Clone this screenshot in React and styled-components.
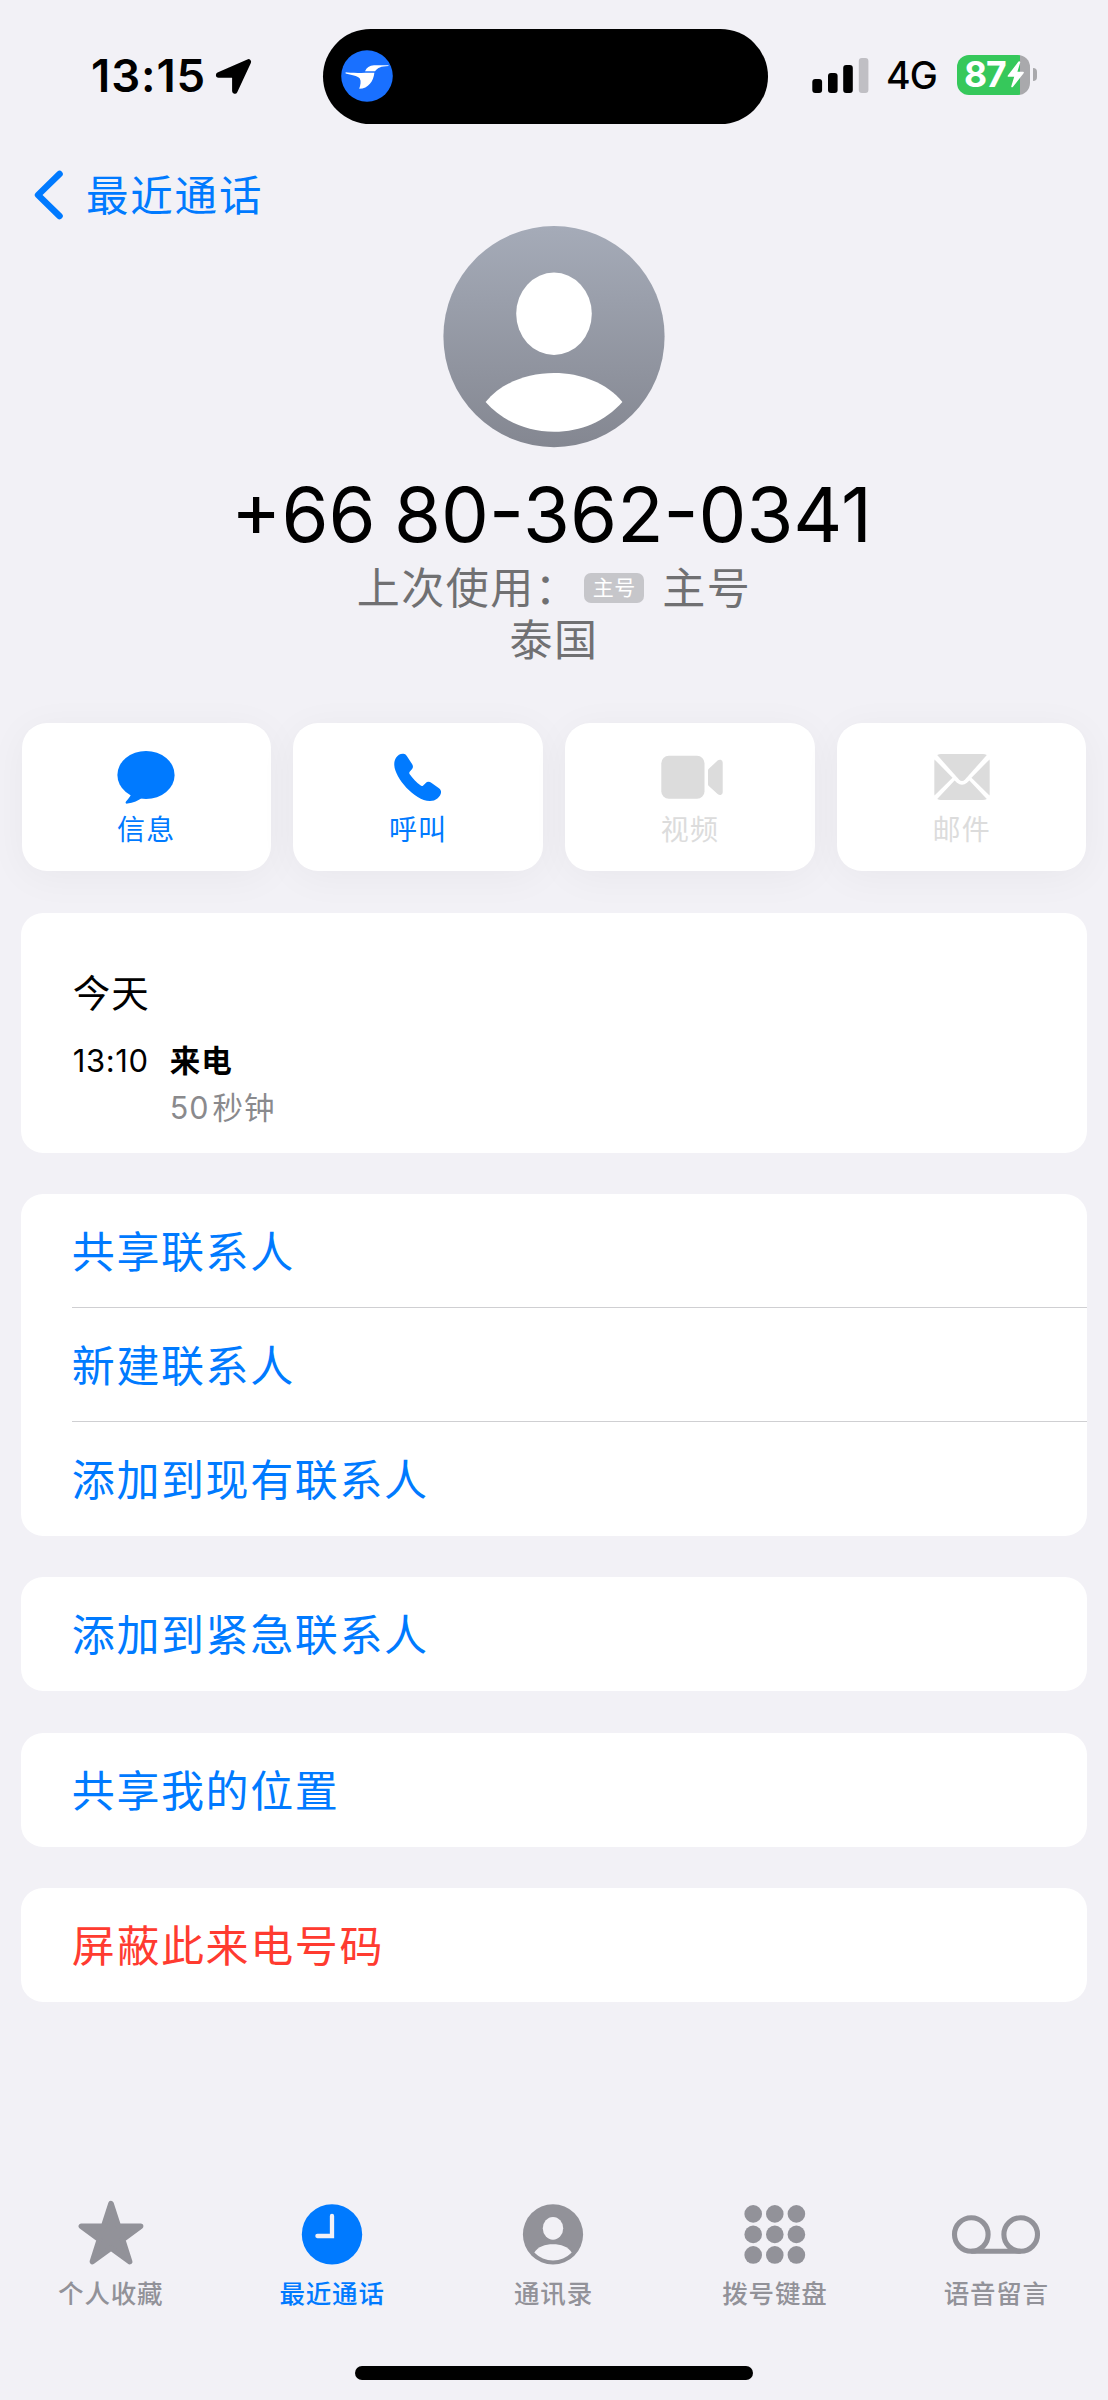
import React from 'react';
import styled, { createGlobalStyle } from 'styled-components';

const BLUE = '#007aff'
const GRAY = '#929299'

const actions = [
  { label: '信息', icon: <MessageIcon /> },
  { label: '呼叫', icon: <PhoneIcon /> },
  { label: '视频', icon: <VideoIcon />, disabled: true },
  { label: '邮件', icon: <MailIcon />, disabled: true },
]

const groups = [
  { items: ['共享联系人', '新建联系人', '添加到现有联系人'] },
  { items: ['添加到紧急联系人'] },
  { items: ['共享我的位置'] },
  { items: ['屏蔽此来电号码'], danger: true },
]

const tabs = [
  { label: '个人收藏', icon: <StarIcon /> },
  { label: '最近通话', icon: <ClockIcon />, active: true },
  { label: '通讯录', icon: <ContactIcon /> },
  { label: '拨号键盘', icon: <KeypadIcon /> },
  { label: '语音留言', icon: <VoicemailIcon /> },
]

function LocationIcon() {
  return (
    <svg width="37" height="37" viewBox="0 0 37 37">
      <path d="M3.6 17L33.4 3.9L19.8 33V17Z" stroke="#000" strokeWidth="5.4" strokeLinejoin="round" />
    </svg>
  )
}

function BirdIcon() {
  return (
    <svg width="52" height="52" viewBox="0 0 52 52">
      <circle cx="26" cy="26" r="25.8" fill="#1970ff" />
      <path d="M24 21.3C25.5 17.5 28.5 15.3 33 15.2L47.5 15.2V15.9C39.5 16.2 37 17.5 34 21.2Z" fill="#fff" />
      <path d="M4.6 22.3C9 23.1 19 22.9 33.4 22.7C32.5 31 27.5 38.6 18.2 38.8C19.5 35 20.3 31.5 18.8 28.6C16.5 25 10 25.3 4.6 23.4Z" fill="#fff" />
    </svg>
  )
}

function SignalIcon() {
  return (
    <svg width="57" height="36" viewBox="0 0 57 36">
      <rect x="0.3" y="21" width="9.8" height="14" rx="3" />
      <rect x="16" y="15" width="9.6" height="20" rx="3" />
      <rect x="31.2" y="7" width="9.6" height="28" rx="3" />
      <rect x="46.8" y="0" width="9.6" height="35" rx="3" fill="#c0bfc4" />
    </svg>
  )
}

function BoltIcon() {
  return (
    <svg width="18" height="27" viewBox="0 0 18 27">
      <path d="M11.5 0.6L0.8 14.6Q0.3 15.8 1.5 15.8H7.2L4.2 25.4Q4.6 27 6 25.8L16.6 12.2Q17.4 10.8 16 10.7H10.4L13.3 1.3Q12.8 -0.4 11.5 0.6Z" fill="#fff" />
    </svg>
  )
}

function BackIcon() {
  return (
    <svg width="30" height="50" viewBox="0 0 30 50">
      <path d="M25.6 3.9L4 25L25.6 46.1" stroke={BLUE} strokeWidth="6.4" strokeLinecap="round" strokeLinejoin="round" fill="none" />
    </svg>
  )
}

function Avatar() {
  return (
    <svg width="222" height="222" viewBox="0 0 222 222">
      <defs>
        <linearGradient id="avatar" x1="0" y1="0" x2="0" y2="1">
          <stop offset="0" stopColor="#a5abb8" />
          <stop offset="1" stopColor="#848791" />
        </linearGradient>
      </defs>
      <circle cx="111" cy="110.6" r="110.6" fill="url(#avatar)" />
      <ellipse cx="111" cy="87.8" rx="37.8" ry="41.2" fill="#fff" />
      <path d="M42.6 176C58 157 84 147 111 147C138 147 164 157 179.4 176C162 195.4 138 205.8 111 205.8C84 205.8 60 195.4 42.6 176Z" fill="#fff" />
    </svg>
  )
}

function MessageIcon() {
  return (
    <svg width="58" height="54" viewBox="0 0 58 54">
      <ellipse cx="29" cy="24" rx="28.6" ry="24" />
      <path d="M15.5 40C14.5 44.5 11.5 47.5 9 50.5C8 52 8.8 52.8 10.5 52.6C16 52 21.5 49.5 26 46Z" />
    </svg>
  )
}

function PhoneIcon() {
  return (
    <svg width="48" height="54" viewBox="0 -3 48 54">
      <path d="M9.3 -0.3C6.4 -0.5 3.6 1.1 2 3.8C0.6 6.2 0.1 8.6 0.3 11.3C0.8 23.5 20.5 47.2 36 47C38.8 47 41.4 46.2 43.4 44.5C45.8 42.6 47.4 39.8 47 37.2C46.7 35.8 45.7 34.8 44.3 33.8L37.6 29C35.3 27.4 33.3 27.5 31.5 29.2L29.2 31.4C28.3 32.2 27.3 32 26.4 31.3C22.5 28.4 18.6 24.3 15.7 20.2C15 19.2 15.1 18.5 15.9 17.6L17.9 15.3C19.2 13.7 19.3 12.2 18.2 10.3L13.3 2.8C12.1 0.9 11.2 -0.2 9.3 -0.3Z" />
    </svg>
  )
}

function VideoIcon() {
  return (
    <svg width="58" height="54" viewBox="0 0 58 54" overflow="visible">
      <rect x="0.3" y="4.8" width="43.2" height="43" rx="7.5" />
      <path d="M47 19.4Q47 18.4 47.8 17.7L56.6 9.6Q58 8.5 59.7 8.8Q61.7 9.2 61.7 11.6V41.2Q61.7 43.5 59.7 43.9Q58 44.1 56.6 43L47.8 35.1Q47 34.4 47 33.3Z" />
    </svg>
  )
}

function MailIcon() {
  return (
    <svg width="56" height="54" viewBox="0 0 56 54">
      <path d="M3.2 4Q5 3 7 3H49Q51 3 52.8 4L31 28.6Q28 31.6 25 28.6Z" />
      <path d="M0.5 8.4L18.5 26.8L0.5 44.4Q0.3 43.6 0.3 42.6V11.1Q0.3 9.6 0.5 8.4Z" />
      <path d="M55.5 8.4L37.5 26.8L55.5 44.4Q55.7 43.6 55.7 42.6V11.1Q55.7 9.6 55.5 8.4Z" />
      <path d="M3.2 48L20.6 29.4L23 31.8Q28 35.9 33 31.8L35.4 29.4L52.8 48Q51 49 49 49H7Q5 49 3.2 48Z" />
    </svg>
  )
}

function StarIcon() {
  return (
    <svg width="68" height="66" viewBox="0 0 68 66">
      <path d="M34 3.6L41.3 26.2H63.6L45.6 39.6L52.6 61.6L34 48L15.4 61.6L22.4 39.6L4.4 26.2H26.7Z" strokeWidth="5.6" stroke="currentColor" strokeLinejoin="round" />
    </svg>
  )
}

function ClockIcon() {
  return (
    <svg width="62" height="66" viewBox="0 0 62 66">
      <circle cx="31" cy="34.4" r="30.2" />
      <path d="M31 16V36H16.4" stroke="#f2f1f6" strokeWidth="4.3" strokeLinecap="round" fill="none" />
    </svg>
  )
}

function ContactIcon() {
  return (
    <svg width="62" height="66" viewBox="0 0 62 66">
      <circle cx="31" cy="34.4" r="30.1" />
      <ellipse cx="31" cy="28.3" rx="10.2" ry="11.4" fill="#f2f1f6" />
      <path d="M12.3 52.4C16 46.9 23 44.3 31 44.3C39 44.3 46 46.9 49.7 52.4C44.5 57.7 38 60.4 31 60.4C24 60.4 17.5 57.7 12.3 52.4Z" fill="#f2f1f6" />
    </svg>
  )
}

function KeypadIcon() {
  const steps = [9.2, 30.8, 52.4]
  return (
    <svg width="62" height="66" viewBox="0 0 62 66">
      {steps.map((x) => steps.map((y) => (
        <circle key={`${x}-${y}`} cx={x} cy={(y - 30.8) * 0.95 + 34.4} r="8.8" />
      )))}
    </svg>
  )
}

function VoicemailIcon() {
  return (
    <svg width="90" height="66" viewBox="0 0 90 66">
      <g fill="none" stroke="currentColor" strokeWidth="5.1">
        <circle cx="20.3" cy="34.5" r="16.8" />
        <circle cx="69.7" cy="34.5" r="16.8" />
        <path d="M20.3 51.3H69.7" />
      </g>
    </svg>
  )
}

const App = () => {
  return (
    <>
      <GlobalStyle />
      <Phone lang="zh-CN">
        <StatusBar>
          <Clock>13:15</Clock>
          <LocationIcon />
          <Island><BirdIcon /></Island>
          <SignalIcon />
          <Network>4G</Network>
          <Battery>
            <Level><span>87</span><BoltIcon /></Level>
            <Nub />
          </Battery>
        </StatusBar>
        <BackLink>
          <BackIcon />
          <span>最近通话</span>
        </BackLink>
        <Profile>
          <Avatar />
          <PhoneNumber>+66 80-362-0341</PhoneNumber>
          <LastUsed>
            <span>上次使用：</span>
            <SimBadge>主号</SimBadge>
            <span>主号</span>
          </LastUsed>
          <Region>泰国</Region>
        </Profile>
        <Actions>
          {actions.map((action) => (
            <ActionButton key={action.label} disabled={action.disabled}>
              {action.icon}
              <span>{action.label}</span>
            </ActionButton>
          ))}
        </Actions>
        <Groups>
          <CallCard>
            <Day>今天</Day>
            <CallRow>
              <CallTime>13:10</CallTime>
              <div>
                <CallType>来电</CallType>
                <Duration>50<span>秒钟</span></Duration>
              </div>
            </CallRow>
          </CallCard>
          {groups.map((group) => (
            <Group key={group.items[0]}>
              {group.items.map((item) => (
                <GroupRow key={item} $danger={group.danger}>{item}</GroupRow>
              ))}
            </Group>
          ))}
        </Groups>
        <TabBar>
          {tabs.map((tab) => (
            <Tab key={tab.label} $active={tab.active}>
              {tab.icon}
              <span>{tab.label}</span>
            </Tab>
          ))}
        </TabBar>
        <HomeIndicator />
      </Phone>
    </>
  )
}

const GlobalStyle = createGlobalStyle`
* {
    box-sizing: border-box;
}
body {
    margin: 0;
    background: #f2f1f6;
    font-family: Inter, "Noto Sans CJK SC", sans-serif;
}
button {
    font-family: inherit;
    border: none;
    padding: 0;
}
svg {
    display: block;
    flex: none;
}
`
const Phone = styled.div`
    width: 1108px;
    height: 2400px;
    display: flex;
    flex-direction: column;
    background: #f2f1f6;
    color: #000000;
    white-space: nowrap;
    overflow: hidden;
`
const StatusBar = styled.header`
    display: flex;
    align-items: center;
    height: 152px;
    padding-left: 91px;
    flex: none;
`
const Clock = styled.div`
    width: 124px;
    font-size: 45.5px;
    font-weight: 600;
    line-height: 50px;
    letter-spacing: 0.9px;
`
const Island = styled.div`
    display: flex;
    align-items: center;
    width: 445px;
    height: 95px;
    margin: 0 44px 0 71px;
    padding-left: 18px;
    border-radius: 48px;
    background: #000000;
`
const Network = styled.div`
    width: 71px;
    padding-left: 17px;
    font-size: 37.5px;
    font-weight: 500;
    line-height: 44px;
    letter-spacing: -0.8px;
`
const Battery = styled.div`
    display: flex;
    align-items: center;
    gap: 3px;
    margin: -3px 0 0 17px;
`
const Level = styled.div`
    display: flex;
    align-items: center;
    width: 73px;
    height: 40px;
    padding-left: 7px;
    border-radius: 12px;
    background: linear-gradient(to right, #36c85b 63.3px, #a9a9ac 63.3px);
    color: #ffffff;
    font-size: 35.5px;
    font-weight: 700;
    letter-spacing: -1px;

    span {
        width: 43px;
    }
`
const Nub = styled.div`
    width: 4px;
    height: 13px;
    border-radius: 0 4px 4px 0;
    background: #a9a9ac;
`
const BackLink = styled.nav`
    display: flex;
    align-items: center;
    height: 74px;
    gap: 22px;
    padding: 12px 0 0 34px;
    flex: none;
    color: ${BLUE};
    font-size: 42.5px;
    line-height: 50px;
    letter-spacing: 1.8px;

    span {
        margin-top: 1px;
    }
`
const Profile = styled.section`
    display: flex;
    flex-direction: column;
    align-items: center;
    height: 497px;
    flex: none;
`
const PhoneNumber = styled.h1`
    margin: 22px 0 0;
    padding-right: 5px;
    font-size: 76px;
    font-weight: 400;
    line-height: 88px;
    word-spacing: -3px;
`
const LastUsed = styled.div`
    display: flex;
    align-items: center;
    height: 52px;
    margin-top: 4px;
    color: #707072;
    font-size: 43px;
    line-height: 52px;
    letter-spacing: 1.5px;
`
const SimBadge = styled.span`
    width: 60px;
    height: 30px;
    margin: -1px 18px 0 5px;
    border-radius: 7px;
    background: #c6c6ca;
    color: #ffffff;
    font-size: 21px;
    line-height: 30px;
    letter-spacing: 0.5px;
    text-align: center;
`
const Region = styled.div`
    color: #707072;
    font-size: 43px;
    line-height: 52px;
    letter-spacing: 1.5px;
`
const Actions = styled.div`
    display: grid;
    grid-template-columns: repeat(4, 1fr);
    gap: 22.4px;
    padding: 0 21.6px;
    flex: none;
`
const ActionButton = styled.button`
    display: flex;
    flex-direction: column;
    align-items: center;
    height: 148px;
    padding-top: 28px;
    border-radius: 25px;
    background: #ffffff;
    box-shadow: 0 6px 40px rgba(0, 0, 0, 0.045);
    color: ${(props) => (props.disabled ? '#dcdcdc' : BLUE)};
    fill: currentColor;
    font-size: 28px;
    line-height: 40px;
    letter-spacing: 1.2px;

    span {
        margin-top: 5px;
    }
`
const Groups = styled.main`
    display: flex;
    flex-direction: column;
    gap: 41.4px;
    height: 1287px;
    margin-top: 42px;
    padding: 0 20.8px;
    flex: none;
`
const CallCard = styled.section`
    height: 239.6px;
    padding: 55px 0 0 52px;
    border-radius: 22px;
    background: #ffffff;
`
const Day = styled.div`
    font-size: 37.5px;
    line-height: 52px;
    letter-spacing: 1px;
`
const CallRow = styled.div`
    display: flex;
    margin-top: 17px;
    font-size: 30.5px;
    line-height: 47px;
    letter-spacing: 1px;
`
const CallTime = styled.div`
    width: 97px;
    font-size: 31px;
    letter-spacing: 0.6px;
`
const CallType = styled.div`
    font-weight: 700;
`
const Duration = styled.div`
    color: #8a8a8d;

    span {
        margin-left: 3px;
    }
`
const Group = styled.section`
    display: flex;
    flex-direction: column;
    padding-left: 51px;
    border-radius: 22px;
    background: #ffffff;
`
const GroupRow = styled.div`
    height: 114px;
    color: ${(props) => (props.$danger ? '#ff3b30' : BLUE)};
    font-size: 43px;
    line-height: 117px;
    letter-spacing: 1.6px;

    &:not(:last-child) {
        border-bottom: 1px solid #cfcfd2;
    }
`
const TabBar = styled.nav`
    display: grid;
    grid-template-columns: repeat(5, 1fr);
    height: 166px;
    padding-right: 1px;
    flex: none;
`
const Tab = styled.div`
    display: flex;
    flex-direction: column;
    align-items: center;
    color: ${(props) => (props.$active ? BLUE : GRAY)};
    fill: currentColor;
    font-size: 25.5px;
    font-weight: 500;
    line-height: 36px;
    letter-spacing: 0.8px;

    span {
        margin-top: 10px;
    }
`
const HomeIndicator = styled.div`
    width: 398px;
    height: 13.5px;
    margin: 0 auto;
    border-radius: 7px;
    background: #000000;
    flex: none;
`
export default App
